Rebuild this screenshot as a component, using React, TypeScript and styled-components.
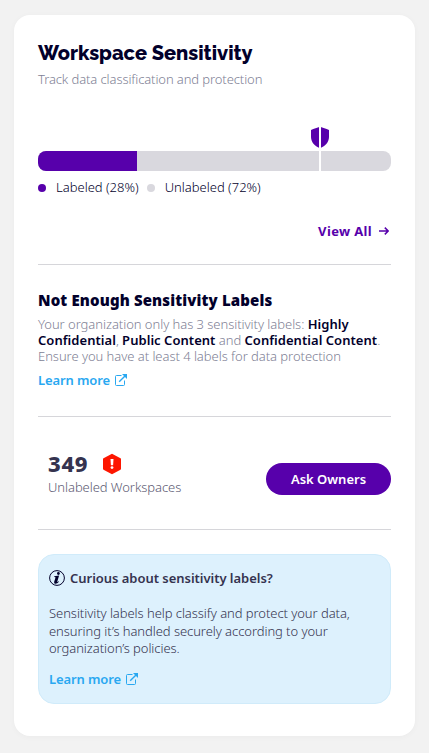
import React from 'react';
import styled, { createGlobalStyle } from 'styled-components';

const GlobalStyle = createGlobalStyle`
  *, *::before, *::after { box-sizing: border-box; }
  body {
    margin: 0;
    background: #f2f2f2;
    font-family: "Noto Sans", "Open Sans", sans-serif;
    font-size: 13px;
    font-weight: 300;
    letter-spacing: -0.06px;
    color: #02002b;
  }
`;

const Card = styled.main`
  width: 401px;
  height: 721px;
  margin: 15px 14px;
  padding: 26px 24px 0;
  border-radius: 16px;
  background: #fff;
  box-shadow: 0 1px 6px rgba(0, 0, 0, 0.03);
  white-space: nowrap;
`;

const Title = styled.h1`
  margin: 0;
  font: 800 20px/24px Raleway, "Open Sans", sans-serif;
  letter-spacing: 0;
`;

const Subtitle = styled.p`
  margin: 5px 0 0;
  line-height: 18px;
  letter-spacing: -0.1px;
  color: #807f95;
`;

const Meter = styled.div`
  position: relative;
  margin-top: 63px;
`;

const Track = styled.div`
  height: 20px;
  border-radius: 8px;
  overflow: hidden;
  background: #d9d8de;
`;

const Fill = styled.div<{ $percent: number }>`
  width: ${({ $percent }) => $percent}%;
  height: 100%;
  background: #5700ab;
`;

const Threshold = styled.div`
  position: absolute;
  left: 272px;
  top: -25px;
  width: 20px;
  height: 45px;
  svg { display: block; }
  &::after {
    content: "";
    position: absolute;
    left: 9px;
    top: 0;
    width: 2px;
    height: 45px;
    background: #fff;
  }
`;

const Legend = styled.div`
  display: flex;
  margin-top: 7px;
  gap: 8px;
  line-height: 18px;
  letter-spacing: 0;
`;

const LegendItem = styled.span<{ $color: string }>`
  display: flex;
  align-items: center;
  gap: 10px;
  &::before {
    content: "";
    width: 8px;
    height: 8px;
    margin-top: 1px;
    border-radius: 50%;
    background: ${({ $color }) => $color};
  }
`;

const ViewAll = styled.a`
  display: flex;
  justify-content: flex-end;
  align-items: center;
  gap: 7px;
  margin-top: 26px;
  padding-right: 2px;
  line-height: 18px;
  font-weight: 700;
  letter-spacing: 0.35px;
  color: #5700ab;
`;

const Divider = styled.hr<{ $top: number }>`
  height: 1px;
  margin: ${({ $top }) => $top}px 0 0;
  border: 0;
  background: #d6d6da;
`;

const Heading = styled.h2`
  margin: 25px 0 0;
  font-size: 15px;
  line-height: 20px;
  font-weight: 900;
  letter-spacing: 0.14px;
`;

const Description = styled.p`
  margin: 6px 0 0;
  line-height: 16px;
  letter-spacing: -0.045px;
  color: #807f95;
  strong {
    font-weight: 600;
    letter-spacing: 0.04px;
    color: #02002b;
  }
`;

const LearnMore = styled.a<{ $top: number }>`
  display: flex;
  align-items: center;
  gap: 5px;
  margin-top: ${({ $top }) => $top}px;
  line-height: 18px;
  font-weight: 600;
  letter-spacing: -0.11px;
  color: #29a8f1;
`;

const Summary = styled.section`
  display: flex;
  justify-content: space-between;
  margin-top: 31px;
  padding-left: 10px;
`;

const Count = styled.div`
  display: flex;
  align-items: center;
  gap: 14px;
  height: 30px;
  font-size: 22px;
  line-height: 30px;
  font-weight: 800;
  letter-spacing: 0.7px;
  color: #35334f;
  svg { margin-top: 1px; }
`;

const CountLabel = styled.div`
  line-height: 18px;
  color: #5d5b73;
`;

const Button = styled.button`
  width: 125px;
  height: 32px;
  margin-top: 15px;
  padding: 0;
  border: 0;
  border-radius: 16px;
  background: #5700ab;
  color: #fff;
  font: 600 13px/32px "Noto Sans", "Open Sans", sans-serif;
  letter-spacing: 0;
`;

const InfoBox = styled.aside`
  height: 150px;
  margin-top: 24px;
  padding: 14px 10px 0;
  border: 1px solid #d0ebfa;
  border-radius: 16px;
  background: #ddf1fd;
`;

const InfoTitle = styled.h3`
  display: flex;
  align-items: center;
  gap: 5px;
  margin: 0;
  font-size: 13px;
  line-height: 18px;
  font-weight: 600;
  letter-spacing: -0.03px;
  color: #35334f;
`;

const InfoText = styled.p`
  margin: 18px 0 0;
  line-height: 17.5px;
  color: #35334f;
`;

const ExternalIcon = () => (
  <svg width="12" height="12" viewBox="0 0 12 12" fill="none" stroke="currentColor">
    <path d="M6.5 1.5H1.5Q.5 1.5.5 2.5V10.5Q.5 11.5 1.5 11.5H8.5Q9.5 11.5 9.5 10.5V6.5" />
    <path d="M4.2 7.8 10.5 1.5" strokeWidth="1.4" />
    <path d="M7 0H12V5Z" fill="currentColor" stroke="none" />
  </svg>
);

export default function App() {
  return (
    <>
      <GlobalStyle />
      <Card>
        <Title>Workspace Sensitivity</Title>
        <Subtitle>Track data classification and protection</Subtitle>
        <Meter>
          <Track><Fill $percent={28} /></Track>
          <Threshold>
            <svg width="20" height="23" viewBox="0 0 20 23">
              <path d="M10 .7C12.8 1.8 16 2.3 19 4V11C18.9 16 15.6 20 10 22.2C4.4 20 1.1 16 1 11V4C4 2.3 7.2 1.8 10 .7Z" fill="#5700ab" />
            </svg>
          </Threshold>
        </Meter>
        <Legend>
          <LegendItem $color="#5700ab">Labeled (28%)</LegendItem>
          <LegendItem $color="#d9d8de">Unlabeled (72%)</LegendItem>
        </Legend>
        <ViewAll>
          View All
          <svg width="10" height="10" viewBox="0 0 10 10" fill="none" stroke="currentColor" strokeWidth="1.5">
            <path d="M0 5H9.2M5.8 1.6 9.2 5 5.8 8.4" />
          </svg>
        </ViewAll>
        <Divider $top={24} />

        <Heading>Not Enough Sensitivity Labels</Heading>
        <Description>
          Your organization only has 3 sensitivity labels: <strong>Highly<br />
          Confidential</strong>, <strong>Public Content</strong> and <strong>Confidential Content</strong>.<br />
          Ensure you have at least 4 labels for data protection
        </Description>
        <LearnMore $top={7}>Learn more<ExternalIcon /></LearnMore>
        <Divider $top={27} />

        <Summary>
          <div>
            <Count>
              349
              <svg width="20" height="22" viewBox="0 0 20 22">
                <path d="M10 1.8 18 6.2V15.8L10 20.2 2 15.8V6.2Z" fill="#fd1600" stroke="#fd1600" strokeWidth="2" strokeLinejoin="round" />
                <path d="M8.5 6H11.5L11.1 12.3H8.9Z" fill="#fff" />
                <circle cx="10" cy="14.6" r="1.4" fill="#fff" />
              </svg>
            </Count>
            <CountLabel>Unlabeled Workspaces</CountLabel>
          </div>
          <Button>Ask Owners</Button>
        </Summary>
        <Divider $top={33} />

        <InfoBox>
          <InfoTitle>
            <svg width="16" height="16" viewBox="0 0 16 16" fill="#02002b">
              <circle cx="8" cy="8" r="7.4" fill="none" stroke="#02002b" />
              <circle cx="9.4" cy="3.5" r="1.4" />
              <path d="M5.3 6.2 10.1 5.5 8.3 11.5Q8 12.7 9.7 11.3L10 11.7Q8.2 13.9 6.2 13.7 4.7 13.5 5.2 11.7L6.5 7.5Q6.7 6.9 5.2 7Z" />
            </svg>
            Curious about sensitivity labels?
          </InfoTitle>
          <InfoText>
            Sensitivity labels help classify and protect your data,<br />
            ensuring it’s handled securely according to your<br />
            organization’s policies.
          </InfoText>
          <LearnMore $top={12}>Learn more<ExternalIcon /></LearnMore>
        </InfoBox>
      </Card>
    </>
  );
}
